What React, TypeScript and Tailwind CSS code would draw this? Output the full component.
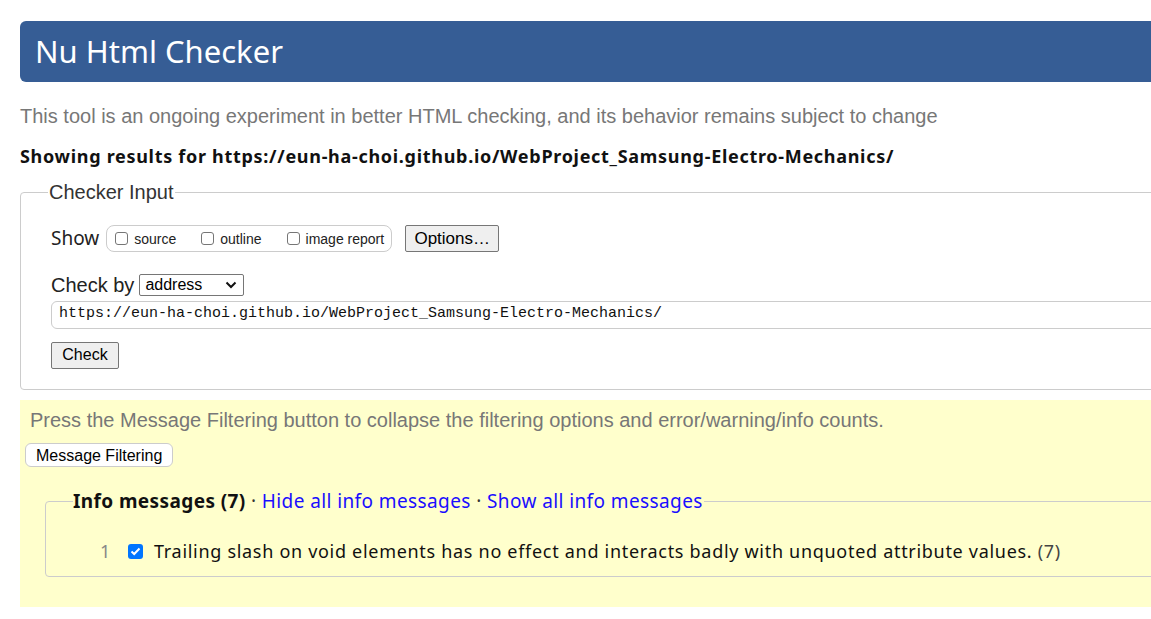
import React from "react";

const malgun = "font-['Noto_Sans',sans-serif]";
const arial = "font-['Liberation_Sans',Arial,sans-serif]";

function Box() {
  return <span className="inline-block w-[13px] h-[13px] border border-[#767676] rounded-[3px] bg-white align-[-1px]"></span>;
}

export default function App() {
  return (
    <div className="w-[1151px] h-[619px] overflow-hidden bg-white">
      <div className="w-[1200px] pl-[20px] pt-[21px]">
        {/* header */}
        <div className="h-[61px] bg-[#365d95] rounded-l-[6px] flex items-center pl-[15px]">
          <h1 className={`${malgun} text-white text-[31px] leading-none`}>Nu Html Checker</h1>
        </div>

        <p className={`${arial} text-[#777] text-[20px] leading-[24px] mt-[22px]`}>
          This tool is an ongoing experiment in better HTML checking, and its behavior remains subject to change
        </p>
        <p className={`${malgun} font-bold text-[#111] text-[18px] tracking-[0.7px] leading-[24px] mt-[16px]`}>
          Showing results for https://eun-ha-choi.github.io/WebProject_Samsung-Electro-Mechanics/
        </p>

        {/* checker input */}
        <fieldset className="mt-[12px] border border-[#ccc] rounded-[4px] pl-[30px] pb-[20px] h-[210px]">
          <legend className={`${arial} text-[20px] text-[#333] ml-[-3px] px-[1px] leading-[24px]`}>Checker Input</legend>
          <div className="flex items-center mt-[20px]">
            <span className={`${malgun} text-[19px] text-[#222] mr-[7px]`}>Show</span>
            <div className={`${arial} text-[14px] text-[#222] h-[27px] w-[286px] border border-[#ccc] rounded-[8px] flex items-center pl-[8px] gap-[25px]`}>
              <label className="flex items-center gap-[6px]"><Box /><span className="mt-[3px]">source</span></label>
              <label className="flex items-center gap-[6px]"><Box /><span className="mt-[3px]">outline</span></label>
              <label className="flex items-center gap-[6px]"><Box /><span className="mt-[3px]">image report</span></label>
            </div>
            <button className={`${arial} ml-[13px] h-[27px] w-[94px] text-[17px] text-black bg-[#efefef] border border-[#767676] rounded-[2px]`}>Options…</button>
          </div>

          <div className="flex items-center mt-[17px]">
            <span className={`${arial} text-[20px] text-[#222] mr-[5px]`}>Check by</span>
            <div className={`${arial} h-[22px] w-[105px] border border-[#767676] rounded-[2px] flex items-center justify-between px-[5px] text-[16px] text-black`}>
              <span>address</span>
              <svg width="12" height="8" viewBox="0 0 12 8" className="mr-[1px]">
                <path d="M1.5 1.5 L6 6 L10.5 1.5" stroke="#111" strokeWidth="2" fill="none" />
              </svg>
            </div>
          </div>

          <div className="mt-[1px] h-[28px] border border-[#ccc] rounded-[6px] flex items-center pl-[7px] font-['Liberation_Mono',monospace] text-[15px] text-[#111]">
            https://eun-ha-choi.github.io/WebProject_Samsung-Electro-Mechanics/
          </div>

          <button className={`${arial} mt-[13px] h-[27px] w-[68px] text-[16px] text-black bg-[#efefef] border border-[#767676] rounded-[2px]`}>Check</button>
        </fieldset>

        {/* filtering */}
        <div className="mt-[10px] bg-[#ffffcc] h-[207px] pt-[8px] pl-[5px]">
          <p className={`${arial} text-[#777] text-[20px] leading-[24px] pl-[5px]`}>
            Press the Message Filtering button to collapse the filtering options and error/warning/info counts.
          </p>
          <button className={`${arial} mt-[11px] h-[24px] px-[10px] text-[16px] text-black bg-white border border-[#ccc] rounded-[6px]`}>Message Filtering</button>

          <fieldset className="ml-[20px] mt-[22px] border border-[#ccc] rounded-[4px] h-[88px] pl-[54px]">
            <legend className={`${malgun} text-[19px] tracking-[0.4px] ml-[-27px] pr-[1px] leading-[24px]`}>
              <span className="font-bold text-[#111]">Info messages (7)</span>
              <span className="text-[#333]"> · </span>
              <a className="text-[#1a0dff]">Hide all info messages</a>
              <span className="text-[#333]"> · </span>
              <a className="text-[#1a0dff]">Show all info messages</a>
            </legend>
            <div className={`${malgun} flex items-center mt-[25px] text-[18px] tracking-[0.7px] text-[#111]`}>
              <span className="text-[#888] w-[28px]">1</span>
              <span className="w-[15px] h-[15px] rounded-[3px] bg-[#0075ff] flex items-center justify-center mr-[11px]">
                <svg width="11" height="9" viewBox="0 0 11 9">
                  <path d="M1.5 4.5 L4.2 7 L9.5 1.5" stroke="white" strokeWidth="2" fill="none" />
                </svg>
              </span>
              <span>Trailing slash on void elements has no effect and interacts badly with unquoted attribute values. <span className="text-[#444]">(7)</span></span>
            </div>
          </fieldset>
        </div>
      </div>
    </div>
  );
}
